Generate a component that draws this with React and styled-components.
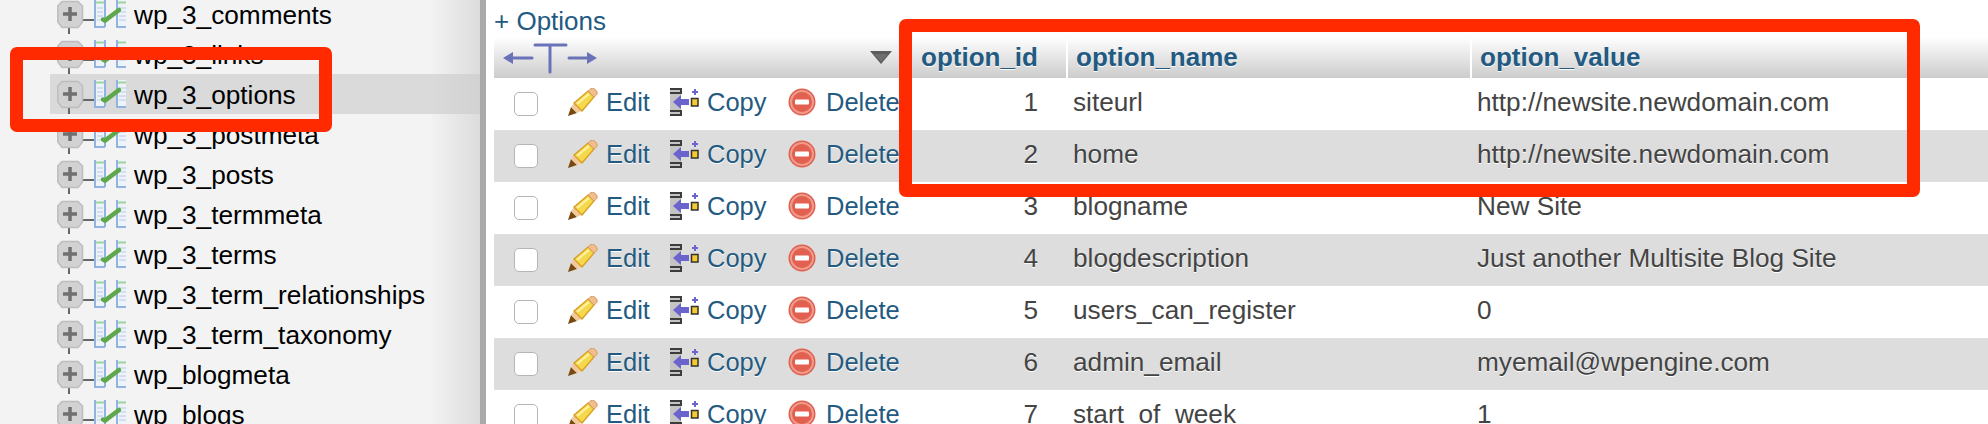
import React from "react";
import styled, { createGlobalStyle } from "styled-components";

const GlobalStyle = createGlobalStyle`
  html, body {
    margin: 0;
    padding: 0;
    background: #fff;
    font-family: "Liberation Sans", Arial, sans-serif;
  }
`;

const Page = styled.div`
  position: relative;
  display: flex;
  width: 1988px;
  height: 424px;
  overflow: hidden;
`;

const Sidebar = styled.aside`
  flex: 0 0 480px;
  height: 100%;
  box-sizing: content-box;
  border-right: 6px solid #aaa;
  background: linear-gradient(to right, #f3f3f3 0, #f3f3f3 430px, #dcdcdc 480px);
  overflow: hidden;
`;

const TreeList = styled.ul`
  list-style: none;
  margin: -6px 0 0;
  padding: 0;
`;

const TreeRow = styled.li`
  position: relative;
  display: flex;
  align-items: flex-start;
  height: 40px;
  margin-left: 50px;
  padding-left: 6px;
  background: ${(p) =>
    p.$active ? "linear-gradient(to right, #dadada 0, #dadada 380px, #d2d2d2 100%)" : "transparent"};
  color: #000;
  font-size: 26.2px;
`;

const TreeLabel = styled.span`
  margin-left: 8px;
  line-height: 42px;
  white-space: nowrap;
`;

const Main = styled.main`
  flex: 1;
  min-width: 0;
  padding-left: 8px;
`;

const OptionsLink = styled.a`
  display: block;
  height: 37px;
  padding-top: 9px;
  box-sizing: border-box;
  color: #235a81;
  font-size: 26px;
  line-height: 24px;
`;

const columns = "412px 160px 404px 1fr";

const HeadRow = styled.div`
  display: grid;
  grid-template-columns: ${columns};
  height: 41px;
  background: linear-gradient(to bottom, #fff, #ccc);
`;

const HeadCell = styled.div`
  display: flex;
  align-items: center;
  box-sizing: border-box;
  padding-left: ${(p) => p.$pad || 8}px;
  border-left: ${(p) => (p.$plain ? "none" : "2px solid #fff")};
  color: #235a81;
  font-size: 26px;
  font-weight: bold;
  text-shadow: 0 1px 0 #fff;
`;

const ActionHead = styled(HeadCell)`
  justify-content: space-between;
  padding: 0 14px 0 9px;
`;

const BodyRow = styled.div`
  display: grid;
  grid-template-columns: ${columns};
  align-items: center;
  height: 52px;
  background: ${(p) => (p.$striped ? "#ddd" : "#fff")};
  color: #444;
  font-size: 26.2px;
  text-shadow: ${(p) => (p.$striped ? "0 1px 0 #fff" : "none")};
`;

const Actions = styled.div`
  display: flex;
  align-items: center;
  padding-left: 20px;
`;

const CheckBox = styled.span`
  flex: none;
  width: 22px;
  height: 22px;
  margin-right: 30px;
  border: 1px solid #b5b5b5;
  border-radius: 5px;
  background: #fff;
`;

const ActionLink = styled.a`
  display: flex;
  flex: none;
  align-items: center;
  gap: ${(p) => p.$gap}px;
  width: ${(p) => p.$width}px;
  margin-bottom: 4px;
  color: #235a81;
  font-size: 25.5px;
  line-height: 28px;
`;

const IdCell = styled.div`
  padding: 0 28px 3px 0;
  text-align: right;
`;

const TextCell = styled.div`
  padding: 0 0 3px 7px;
  white-space: nowrap;
`;

const RedFrame = styled.div`
  position: absolute;
  left: ${(p) => p.$left}px;
  top: ${(p) => p.$top}px;
  width: ${(p) => p.$width}px;
  height: ${(p) => p.$height}px;
  box-sizing: border-box;
  border: 13.5px solid #ff2a00;
  border-radius: 7px;
`;

function ExpandIcon() {
  return (
    <svg width="38" height="40" viewBox="0 0 38 40" style={{ flex: "none" }}>
      <path d="M13 34v6M27 26h11" stroke="#666" strokeWidth="2" fill="none" />
      <path
        d="M5 7.500h16l4.500 4.500v16L21 33.500H5L.8 28V12z"
        fill="#d2d2d2"
        stroke="#bdbdbd"
        strokeWidth="1.500"
        transform="translate(1 0)"
      />
      <path d="M14 13v14M7 20h14" stroke="#707070" strokeWidth="3.500" />
    </svg>
  );
}

function TableIcon() {
  return (
    <svg width="32" height="28" viewBox="0 0 32 28" style={{ flex: "none", marginTop: 6 }}>
      <rect x="0" y="0" width="12" height="28" fill="#eef3fa" />
      <rect x="22" y="0" width="10" height="28" fill="#eef3fa" />
      <path d="M1 0v27h10M11 0v27" fill="none" stroke="#8fb4e0" strokeWidth="2" />
      <path d="M23 0v27h9" fill="none" stroke="#8fb4e0" strokeWidth="2" />
      <path d="M2 2.500h8M24 2.500h8" stroke="#9ed49e" strokeWidth="2" />
      <path d="M3 8h6M3 12h6M3 16h6M3 20h6M25 8h7M25 12h7M25 16h7M25 20h7" stroke="#c8d9ee" strokeWidth="1.500" />
      <path d="M9 19.500l2 1L25 10" fill="none" stroke="#5fa84a" strokeWidth="4.500" strokeLinecap="round" />
    </svg>
  );
}

function PencilIcon() {
  return (
    <svg width="30" height="28" viewBox="0 0 30 28" style={{ flex: "none" }}>
      <path d="M0 28l3-9 6 6z" fill="#7a4a10" />
      <path d="M3 19l4-5 8 8-6 3z" fill="#f2c99a" />
      <path d="M6 15L20 3l6 6-12 14z" fill="#f5d94a" stroke="#d89a20" strokeWidth="1.200" />
      <path d="M20 3l3-2.500c2-.8 5 .8 6 3.500 .4 1.500 0 2.500-.5 3L26 9z" fill="#f0bd8c" stroke="#d89a60" strokeWidth="1" />
      <path d="M9 16L21 6" stroke="#fff3a8" strokeWidth="2" />
    </svg>
  );
}

function CopyIcon() {
  return (
    <svg width="29" height="28" viewBox="0 0 29 28" style={{ flex: "none" }}>
      <rect x="0" y="1" width="11" height="26" fill="#c4c4c4" />
      <path d="M0 1h11v4H0M0 27h11v-4H0" fill="#c4c4c4" stroke="#3c3c3c" strokeWidth="2" />
      <path d="M3 14l8-7v4h8v6h-8v4z" fill="#6a64cc" />
      <path d="M25 1v6M22 4h6" stroke="#6a64cc" strokeWidth="2" />
      <rect x="21.500" y="10.500" width="6.500" height="7.500" fill="#f7c92e" stroke="#333" strokeWidth="1.500" />
    </svg>
  );
}

function DeleteIcon() {
  return (
    <svg width="28" height="28" viewBox="0 0 28 28" style={{ flex: "none" }}>
      <circle cx="14" cy="14" r="13.500" fill="#e0604f" />
      <circle cx="14" cy="14" r="11" fill="none" stroke="#f09a8c" strokeWidth="2" />
      <circle cx="14" cy="14" r="9.500" fill="#e2604f" />
      <rect x="7" y="11.500" width="14" height="5" rx="1" fill="#fff" />
    </svg>
  );
}

function ResizeIcon() {
  return (
    <svg width="94" height="34" viewBox="0 0 94 34" style={{ flex: "none" }}>
      <path
        d="M10 17h19M66 17h19M47 4v27M32 4h31"
        stroke="#6b73b8"
        fill="none"
        strokeWidth="3"
        strokeLinecap="round"
      />
      <path d="M0 17l10-6v12zM94 17l-10-6v12z" fill="#6b73b8" />
    </svg>
  );
}

function SortIcon() {
  return (
    <svg width="22" height="13" viewBox="0 0 22 13">
      <path d="M0 0h22L11 13z" fill="#5c5c5c" />
      <path d="M4 3h14l-7 8z" fill="#6e6e6e" />
    </svg>
  );
}

const tables = [
  "wp_3_comments",
  "wp_3_links",
  "wp_3_options",
  "wp_3_postmeta",
  "wp_3_posts",
  "wp_3_termmeta",
  "wp_3_terms",
  "wp_3_term_relationships",
  "wp_3_term_taxonomy",
  "wp_blogmeta",
  "wp_blogs",
];

const options = [
  [1, "siteurl", "http://newsite.newdomain.com"],
  [2, "home", "http://newsite.newdomain.com"],
  [3, "blogname", "New Site"],
  [4, "blogdescription", "Just another Multisite Blog Site"],
  [5, "users_can_register", "0"],
  [6, "admin_email", "myemail@wpengine.com"],
  [7, "start_of_week", "1"],
];

export default function App() {
  return (
    <Page>
      <GlobalStyle />
      <Sidebar>
        <TreeList>
          {tables.map((name) => (
            <TreeRow key={name} $active={name === "wp_3_options"}>
              <ExpandIcon />
              <TableIcon />
              <TreeLabel>{name}</TreeLabel>
            </TreeRow>
          ))}
        </TreeList>
      </Sidebar>
      <Main>
        <OptionsLink>+ Options</OptionsLink>
        <HeadRow>
          <ActionHead $plain>
            <ResizeIcon />
            <SortIcon />
          </ActionHead>
          <HeadCell $pad={13}>option_id</HeadCell>
          <HeadCell>option_name</HeadCell>
          <HeadCell>option_value</HeadCell>
        </HeadRow>
        {options.map(([id, name, value], i) => (
          <BodyRow key={id} $striped={i % 2 === 1}>
            <Actions>
              <CheckBox />
              <ActionLink $width={102} $gap={8}>
                <PencilIcon />
                Edit
              </ActionLink>
              <ActionLink $width={118} $gap={8}>
                <CopyIcon />
                Copy
              </ActionLink>
              <ActionLink $width={116} $gap={10}>
                <DeleteIcon />
                Delete
              </ActionLink>
            </Actions>
            <IdCell>{id}</IdCell>
            <TextCell>{name}</TextCell>
            <TextCell>{value}</TextCell>
          </BodyRow>
        ))}
      </Main>
      <RedFrame $left={10} $top={47} $width={322} $height={85} />
      <RedFrame $left={899} $top={19} $width={1021} $height={178} />
    </Page>
  );
}
